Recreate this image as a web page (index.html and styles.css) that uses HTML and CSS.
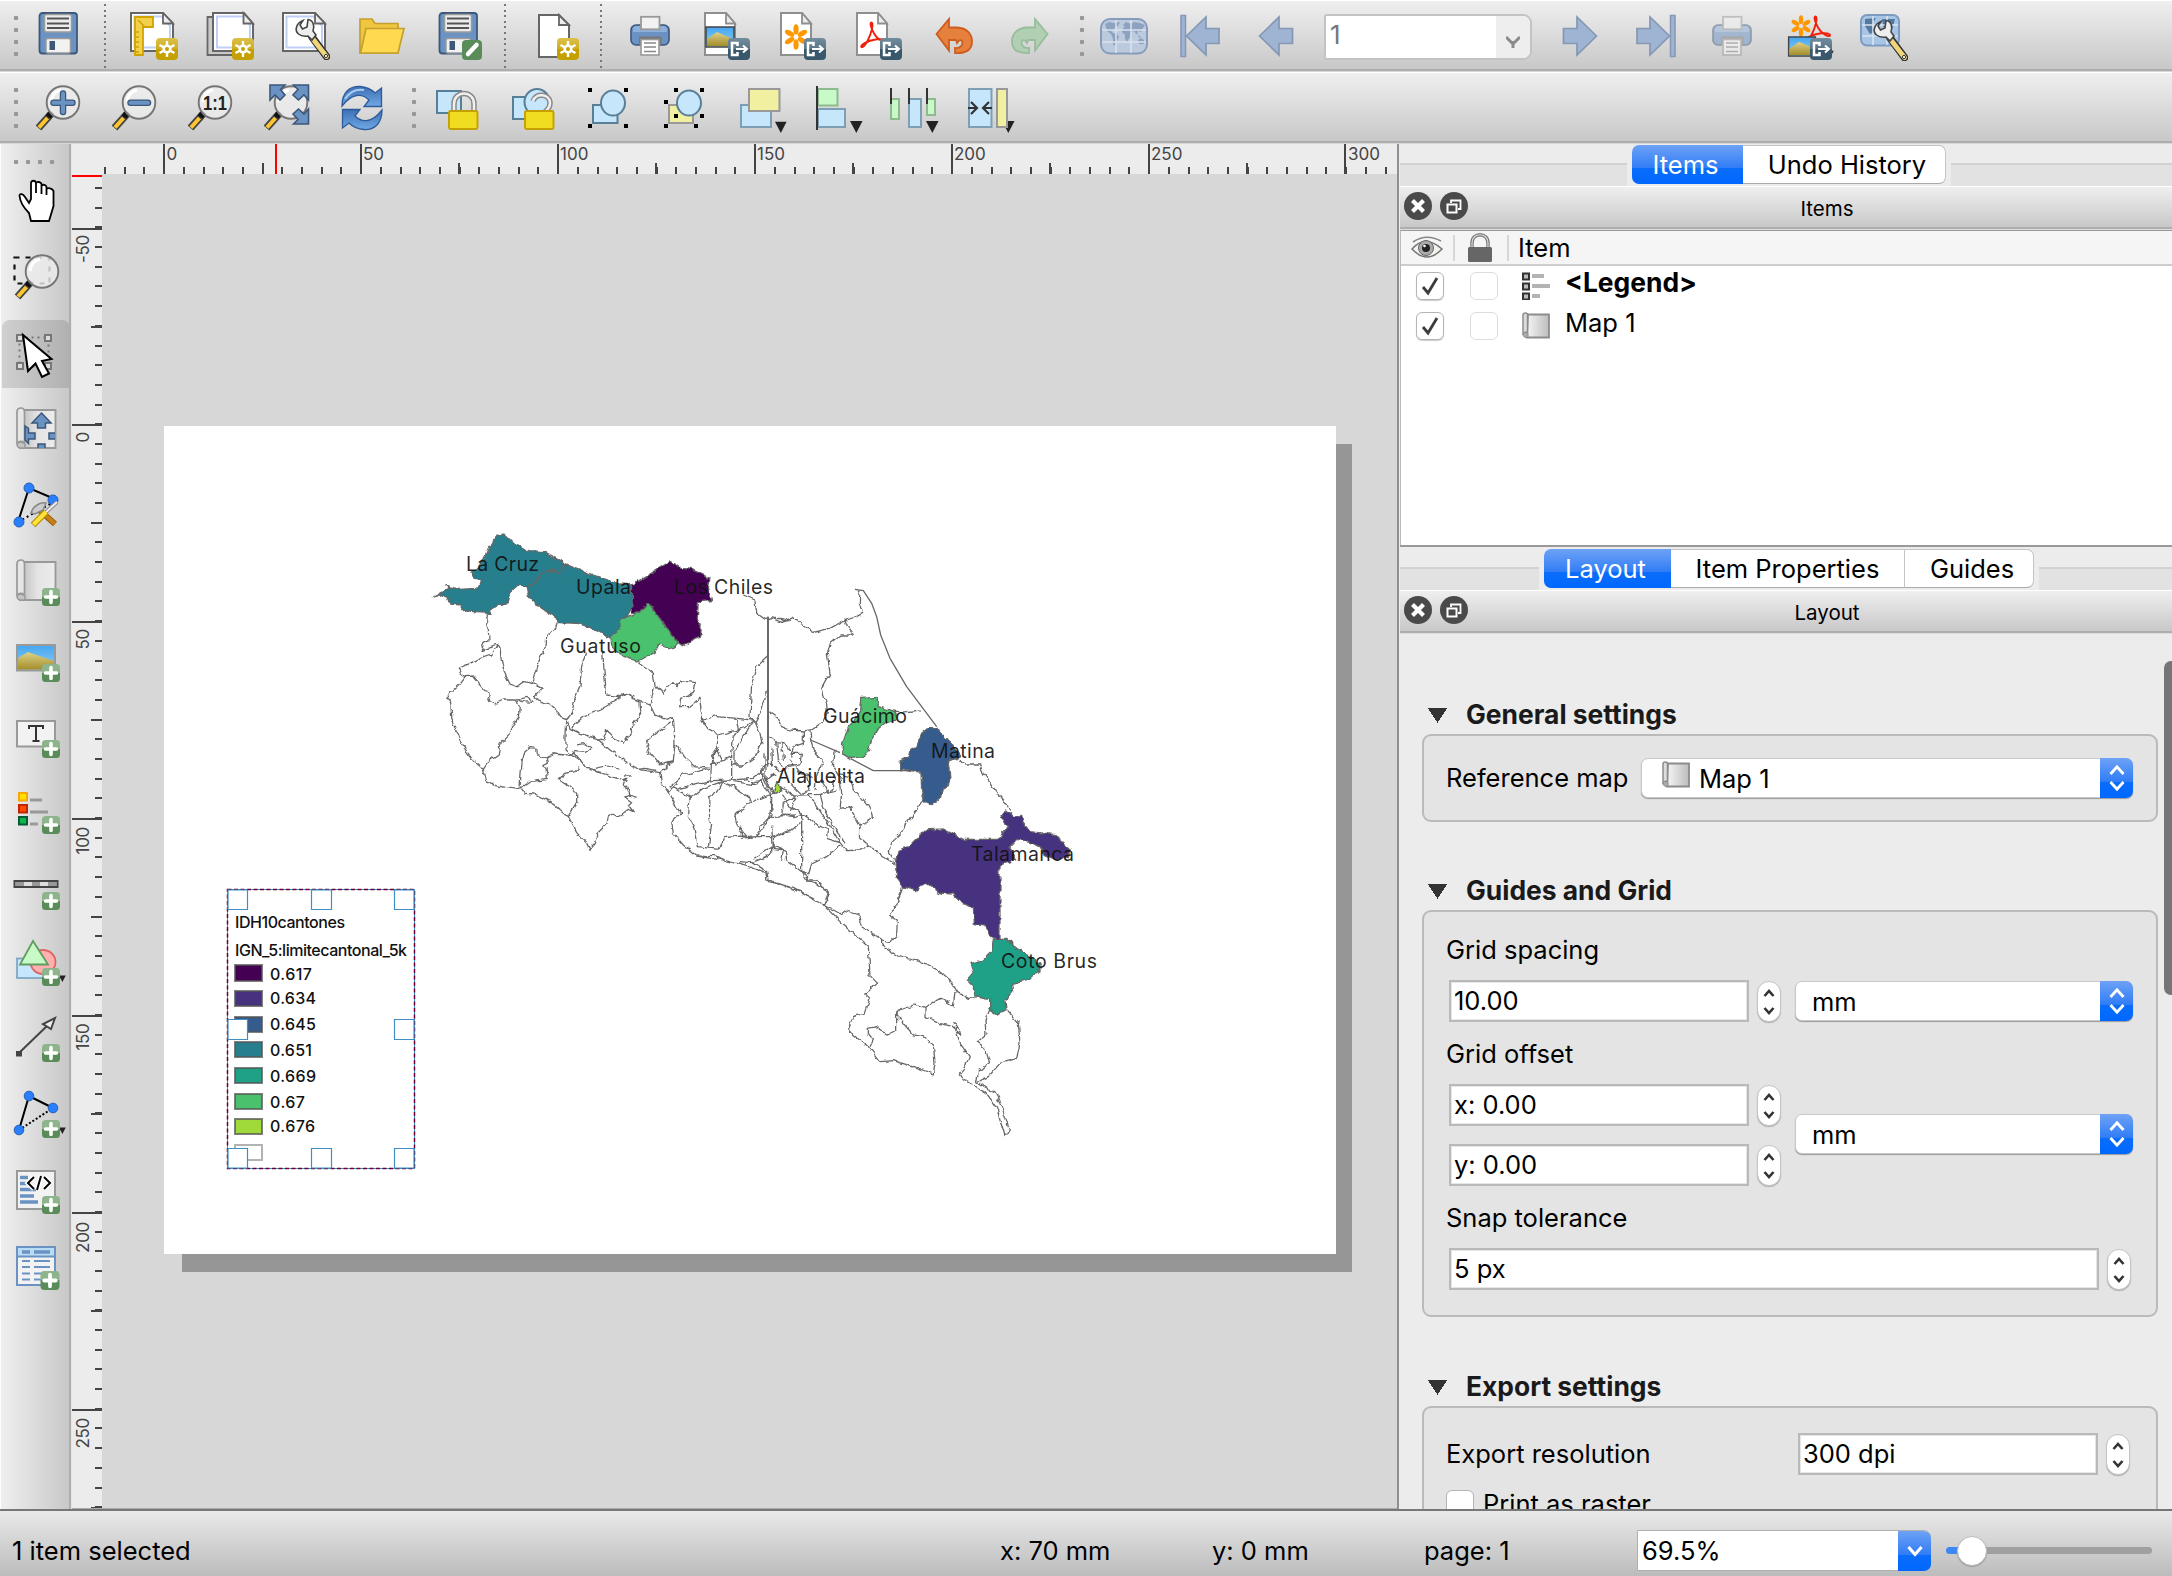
FILE: index.html
```html
<!DOCTYPE html>
<html lang="en">
<head>
<meta charset="utf-8">
<title>Layout</title>
<link rel="stylesheet" href="styles.css">
</head>
<body>
<svg class="defs" aria-hidden="true">
  <defs>
    <filter id="coast" x="-5%" y="-5%" width="110%" height="110%" color-interpolation-filters="sRGB"><feTurbulence type="fractalNoise" baseFrequency=".045" numOctaves="2" seed="4" result="n"/><feDisplacementMap in="SourceGraphic" in2="n" scale="17" xChannelSelector="R" yChannelSelector="G"/></filter>
    <linearGradient id="gNew" x2="0" y2="1"><stop offset="0" stop-color="#dcc04a"/><stop offset=".5" stop-color="#cfae1f"/><stop offset=".5" stop-color="#c4a000"/><stop offset="1" stop-color="#c4a000"/></linearGradient>
    <linearGradient id="gPlus" x2="0" y2="1"><stop offset="0" stop-color="#8db48b"/><stop offset=".5" stop-color="#8db48b"/><stop offset=".5" stop-color="#5a8c5a"/><stop offset="1" stop-color="#5a8c5a"/></linearGradient>
    <linearGradient id="gExp" x2="0" y2="1"><stop offset="0" stop-color="#718c9c"/><stop offset=".5" stop-color="#5a7688"/><stop offset=".5" stop-color="#3a586c"/><stop offset="1" stop-color="#3a586c"/></linearGradient>
    <linearGradient id="gSky" x2="0" y2="1"><stop offset="0" stop-color="#45a6f0"/><stop offset="1" stop-color="#8fd0f5"/></linearGradient>
    <linearGradient id="gSand" x2="0" y2="1"><stop offset="0" stop-color="#dfd28a"/><stop offset="1" stop-color="#a48d2a"/></linearGradient>
    <linearGradient id="gSync" x2="0" y2="1"><stop offset="0" stop-color="#3f6fb4"/><stop offset="1" stop-color="#6fa8e4"/></linearGradient>
    <linearGradient id="gRoll"><stop offset="0" stop-color="#bdbdbd"/><stop offset=".5" stop-color="#e4e4e4"/><stop offset="1" stop-color="#ececec"/></linearGradient>
    <linearGradient id="gMap"><stop offset="0" stop-color="#f5f5f5"/><stop offset="1" stop-color="#bcbcbc"/></linearGradient>
    <symbol id="bNew" viewBox="0 0 22 22"><rect width="22" height="22" rx="4" fill="url(#gNew)"/><path d="M11 3V19M3.500 7L18.500 15M18.500 7L3.500 15" stroke="#fff" stroke-width="2.400"/><circle cx="11" cy="11" r="4.600" fill="#fff"/><circle cx="11" cy="11" r="2" fill="#c4a000"/></symbol>
    <symbol id="bPlus" viewBox="0 0 18 18"><rect width="18" height="18" rx="3.500" fill="url(#gPlus)"/><path d="M9 3.500V14.500M3.500 9H14.500" stroke="#fff" stroke-width="3.600" stroke-linecap="round"/></symbol>
    <symbol id="bExp" viewBox="0 0 22 22"><rect width="22" height="22" rx="4" fill="url(#gExp)"/><path d="M9.500 8V5H4V17H9.500V14" fill="none" stroke="#fff" stroke-width="2.500"/><path d="M8 11H18M15 7.500L19 11L15 14.500" fill="none" stroke="#fff" stroke-width="2"/></symbol>
    <symbol id="page" viewBox="0 0 34 46"><path d="M2 1H23L32 11.500V43H2Z" fill="#fff" stroke="#8f8f8f" stroke-width="2"/><path d="M23 1V11.500H32Z" fill="#ececec" stroke="#8f8f8f" stroke-width="1.800"/></symbol>
    <symbol id="sheet" viewBox="0 0 46 42"><path d="M1 1H33L43 11.500V39H1Z" fill="#fff" stroke="#666" stroke-width="2"/><path d="M4.500 4.500H32L40 14V35.500H4.500Z" fill="none" stroke="#c0d0f5" stroke-width="2"/><path d="M33 1V11.500H43Z" fill="#eee" stroke="#666" stroke-width="1.800"/></symbol>
    <symbol id="disk" viewBox="0 0 48 48"><rect x="5.500" y="1" width="37.500" height="40.500" rx="3" fill="#6a93c4" stroke="#3d5778" stroke-width="1.800"/><rect x="10.500" y="2.500" width="27" height="17.500" rx="2" fill="#ececec" stroke="#9b9b9b" stroke-width="1.500"/><path d="M13 6.500H35M13 11.500H35M13 16H35" stroke="#555" stroke-width="1.800"/><rect x="12" y="26.500" width="24.500" height="14.500" rx="2" fill="#f2f2f2" stroke="#9b9b9b" stroke-width="1.500"/><rect x="15.500" y="29" width="5.500" height="9" fill="#3d5778"/></symbol>
    <symbol id="wrench" viewBox="0 0 48 48"><path d="M30 25L44.500 44.500" stroke="#333" stroke-width="7.500" stroke-linecap="round"/><path d="M31 27L44.500 44.500" stroke="#efd67a" stroke-width="4.800" stroke-linecap="round"/><circle cx="44" cy="44" r="1.600" fill="#fff" stroke="#333"/><path d="M21 8.500C14.500 11 12 18 16.500 22C19.500 24.500 23 24.500 26 24L30 28L34 23L31 19C33 14 31 8 26 7.500L25 15L20.500 17L18 13Z" fill="#eee" stroke="#444" stroke-width="1.600"/></symbol>
    <symbol id="printer" viewBox="0 0 48 48"><rect x="5" y="13" width="38" height="20" rx="5" fill="#6a93c4" stroke="#3d5778" stroke-width="1.600"/><path d="M7 18Q7 14 11 14H37Q41 14 41 18V20H7Z" fill="#8db0da"/><rect x="15" y="4.800" width="18.500" height="12.500" fill="#f2f2f2" stroke="#999" stroke-width="1.800"/><rect x="13" y="24.500" width="22.500" height="9" fill="#777"/><rect x="15" y="27.500" width="18" height="15.500" fill="#fff" stroke="#999" stroke-width="1.600"/><path d="M18 31H30M18 35H30M18 39.500H30" stroke="#888" stroke-width="1.600"/></symbol>
    <symbol id="flower" viewBox="0 0 28 28"><g fill="#ff9800"><ellipse cx="14" cy="6" rx="2.800" ry="5.600"/><ellipse cx="14" cy="22" rx="2.800" ry="5.600"/><g transform="rotate(60 14 14)"><ellipse cx="14" cy="6" rx="2.800" ry="5.600"/><ellipse cx="14" cy="22" rx="2.800" ry="5.600"/></g><g transform="rotate(120 14 14)"><ellipse cx="14" cy="6" rx="2.800" ry="5.600"/><ellipse cx="14" cy="22" rx="2.800" ry="5.600"/></g></g></symbol>
    <symbol id="acro" viewBox="0 0 28 28"><path d="M12 1.500C14.500 1.500 12 12 8.500 19C6 24 3 27 1.800 26C1 24 8 19.500 16 18.500C22 17.500 27 18.500 26.500 20.500C25.500 22.500 18 19 14.500 12.500C11.500 7 10 1.500 12 1.500Z" fill="none" stroke="#f0200c" stroke-width="1.900"/></symbol>
    <symbol id="pic" viewBox="0 0 30 22"><rect x="1" y="1" width="28" height="20" fill="url(#gSky)" stroke="#444" stroke-width="1.500"/><path d="M2 13L12 6L28 13V20H2Z" fill="url(#gSand)"/></symbol>
    <symbol id="world" viewBox="0 0 48 48"><rect x="1" y="7" width="46" height="34.500" rx="9" fill="#bccadd" stroke="#879cbd" stroke-width="2"/><path d="M5 12L9 10L14 11L20 10L18 14L15 15L14 18L11 19L13 21L17 22L19 25L17 29L15 34L13 32L13 27L11 22L7 19L6 15ZM23 13L26 10L31 12L34 10L40 11L45 13L43 16L41 20L38 19L37 23L34 19L31 20L30 25L27 30L25 27L25 23L22 20L23 16L25 15ZM38 28L41 26L44 28L44 32L39 32ZM38 23L41 25L39 26Z" fill="#8da1c1"/><path d="M2 18H46M2 30H46M16 8V41M31 8V41" stroke="#dae2ed" stroke-width="1.500"/></symbol>
    <symbol id="glass" viewBox="0 0 48 48"><path d="M17 30L4.500 44" stroke="#444" stroke-width="7.500"/><path d="M13.500 34L5 43.500" stroke="#fdc62f" stroke-width="4"/><path d="M18 28L14 33" stroke="#111" stroke-width="6"/><ellipse cx="29" cy="18.500" rx="16.300" ry="16.300" fill="#ececec" fill-opacity=".8" stroke="#757575" stroke-width="1.900"/><path d="M17 18Q18 8 27 6" stroke="#fff" stroke-width="3" fill="none"/></symbol>
    <symbol id="arrL" viewBox="0 0 48 48"><path d="M7.500 24L27 5V16.500H40.500V31.500H27V43Z" fill="#9fb4d2" stroke="#8497b5" stroke-width="1.700"/></symbol>
    <symbol id="arrEnd" viewBox="0 0 48 48"><rect x="5" y="3.500" width="4.500" height="41" fill="#9fb4d2" stroke="#8497b5" stroke-width="1.500"/><path d="M10.500 24L30 5V16.500H43V31.500H30V43Z" fill="#9fb4d2" stroke="#8497b5" stroke-width="1.700"/></symbol>
    <symbol id="uturn" viewBox="0 0 48 48"><path d="M6.500 22L19 7V15.500H27C37 16 42 22 42 29.500C42 38 36 41.500 25 41V36C31 36.500 33.500 32 32 29C31 27.500 28.500 28 27 31L26 28H19V38.500Z" fill="currentColor" stroke-width="1.800"/></symbol>
    <symbol id="roll" viewBox="0 0 48 48"><path d="M12 4H43.500V42H8V6Z" fill="url(#gRoll)" stroke="#999" stroke-width="1.900"/><path d="M5 6Q5 2 9 2Q12.500 2 12.500 6V36Q6 34 5 38Z" fill="#e6e6e6" stroke="#999" stroke-width="1.700"/><path d="M5 38Q5 42.500 10 42H13V38Q8 34 5 38Z" fill="#c4c4c4" stroke="#999" stroke-width="1.500"/></symbol>
    <symbol id="drop" viewBox="0 0 14 14"><path d="M0 1H13.500L6.800 14Z" fill="#222"/></symbol>
    <symbol id="mapIcon" viewBox="0 0 28 28"><path d="M6 2.500H27V25.500H5Z" fill="url(#gMap)" stroke="#8c8c8c" stroke-width="1.800"/><path d="M1 3Q1 1 3.500 1Q5.500 1 5.500 3V20Q2 20 1 23Z" fill="#ddd" stroke="#8c8c8c" stroke-width="1.500"/><path d="M1 22Q1 26 6 25.500V21Q2 19 1 22Z" fill="#aaa" stroke="#8c8c8c"/></symbol>
    <symbol id="closeBtn" viewBox="0 0 28 28"><circle cx="14" cy="14" r="14" fill="#4a4a4a"/><path d="M8.500 8.500L19.500 19.500M19.500 8.500L8.500 19.500" stroke="#fff" stroke-width="4.200"/></symbol>
    <symbol id="floatBtn" viewBox="0 0 28 28"><circle cx="14" cy="14" r="14" fill="#4a4a4a"/><path d="M11 11V8.500H20.500V17H18" fill="none" stroke="#fff" stroke-width="1.800"/><rect x="7.500" y="12.500" width="9" height="8" fill="none" stroke="#fff" stroke-width="2"/></symbol>
  </defs>
</svg>

<div class="app">
  <div class="bar">
    <div class="grip"></div>
    <svg class="ic"><use href="#disk"/></svg>
    <div class="sep"></div>
    <svg class="ic"><use href="#sheet" width="46" height="42"/><path d="M5 5H23V15H13V43H5Z" fill="#f3d04c" stroke="#cfa400" stroke-width="1.800"/><path d="M5 20H9M5 25H9M5 30H9M5 35H9M5 40H9M8 8L15 15" stroke="#cfa400" stroke-width="1.500"/><use href="#bNew" x="26" y="26" width="22" height="22"/></svg>
    <svg class="ic"><path d="M1.500 5H30V43H1.500Z" fill="#c9c9c9" stroke="#666" stroke-width="1.800"/><path d="M7 1H38L47 11.500V39H7Z" fill="#fff" stroke="#666" stroke-width="2"/><path d="M11 4.500H37L44 13V35.500H11Z" fill="none" stroke="#c0d0f5" stroke-width="2"/><path d="M37.500 1V11.500H47Z" fill="#eee" stroke="#666" stroke-width="1.800"/><use href="#bNew" x="26" y="26" width="22" height="22"/></svg>
    <svg class="ic"><use href="#sheet" width="46" height="42"/><use href="#wrench"/></svg>
    <svg class="ic"><path d="M2 41V7H14L17 11.500H40V41Z" fill="#f0c63f" stroke="#c3a02f" stroke-width="1.700"/><path d="M8 16.500H46L40 41H2.500Z" fill="#ffd950" stroke="#c3a02f" stroke-width="1.700"/></svg>
    <svg class="ic"><use href="#disk"/><rect x="28" y="28" width="20" height="20" rx="4" fill="#5a8c5a"/><path d="M34 42L42.500 33" stroke="#fff" stroke-width="4.500" stroke-linecap="round"/></svg>
    <div class="sep sep-wide"></div>
    <svg class="ic"><path d="M7 3H27L37 13V45H7Z" fill="#fff" stroke="#666" stroke-width="2"/><path d="M27 3V13H37Z" fill="#eee" stroke="#666" stroke-width="1.800"/><use href="#bNew" x="25" y="26" width="22" height="22"/></svg>
    <div class="sep sep-slim"></div>
    <svg class="ic"><use href="#printer"/></svg>
    <svg class="ic"><use href="#page" x="1" width="34" height="46"/><use href="#pic" x="3" y="14" width="30" height="22"/><use href="#bExp" x="26" y="26" width="22" height="22"/></svg>
    <svg class="ic"><use href="#page" x="1" width="34" height="46"/><use href="#flower" x="5" y="12" width="26" height="26"/><use href="#bExp" x="26" y="26" width="22" height="22"/></svg>
    <svg class="ic"><use href="#page" x="1" width="34" height="46"/><use href="#acro" x="5" y="9" width="29" height="28"/><use href="#bExp" x="26" y="26" width="22" height="22"/></svg>
    <svg class="ic undo"><use href="#uturn"/></svg>
    <svg class="ic redo"><use href="#uturn" transform="translate(48 0) scale(-1 1)"/></svg>
    <div class="grip grip-mid"></div>
    <svg class="ic"><use href="#world"/></svg>
    <svg class="ic"><use href="#arrEnd"/></svg>
    <svg class="ic"><use href="#arrL"/></svg>
    <div class="pagebox"><span>1</span><i><svg width="14" height="12"><path d="M0 1L7 8L14 1M7 5V12" fill="none" stroke="#8a8a8a" stroke-width="3"/></svg></i></div>
    <svg class="ic"><use href="#arrL" transform="translate(48 0) scale(-1 1)"/></svg>
    <svg class="ic"><use href="#arrEnd" transform="translate(48 0) scale(-1 1)"/></svg>
    <svg class="ic faded"><use href="#printer"/></svg>
    <svg class="ic"><use href="#drop" x="39" y="38" width="13" height="9"/><use href="#flower" x="5" y="3" width="24" height="22"/><use href="#acro" x="19" y="3" width="29" height="28"/><use href="#pic" x="3" y="24" width="30" height="21"/><use href="#bExp" x="26" y="26" width="22" height="22"/></svg>
    <svg class="ic"><rect x="1" y="3" width="38" height="30.500" rx="6" fill="#a9c5e6" stroke="#7d9bc0" stroke-width="2"/><path d="M5 7L16 6L12 13L14 20L10 22L5 14ZM22 7L35 7L33 15L27 20L23 14ZM28 26L34 24L33 29Z" fill="#55789f"/><path d="M2 13H38M2 24H38M13 4V33M27 4V33" stroke="#d6e4f4" stroke-width="1.600"/><use href="#wrench" y="1"/></svg>
  </div>
  <div class="bar">
    <div class="grip"></div>
    <svg class="ic"><use href="#glass"/><path d="M29 9.500V28M19.500 18.700H38.500" stroke="#3d5778" stroke-width="6.500" stroke-linecap="round"/><path d="M29 9.500V28M19.500 18.700H38.500" stroke="#6a93c4" stroke-width="4" stroke-linecap="round"/></svg>
    <svg class="ic"><use href="#glass"/><path d="M20.500 18.700H38" stroke="#3d5778" stroke-width="6.500" stroke-linecap="round"/><path d="M20.500 18.700H38" stroke="#6a93c4" stroke-width="4" stroke-linecap="round"/></svg>
    <svg class="ic"><use href="#glass"/><text class="one" x="17" y="25.500" textLength="24" lengthAdjust="spacingAndGlyphs">1:1</text></svg>
    <svg class="ic"><use href="#glass"/><g fill="#6a93c4" stroke="#3d5778" stroke-width="1.600"><path d="M8 1H23L18.500 5.500L23 11L18 16L13 11L8 16Z"/><path d="M46.500 1H31.500L36 5.500L31 11L36.500 16L42 11L46.500 16Z"/><path d="M46.500 40H31.500L36 35.500L31 30L36.500 25L42 30L46.500 25Z"/></g></svg>
    <svg class="ic"><g stroke="#2e5b9a" stroke-width="1.300" fill="url(#gSync)"><path d="M4 22C4 8 12 2 22 2.500C30 3 34 6 37 9L43.500 4V22.500H26L31 16C24 9 14 9 4 22Z"/><path d="M44 26C44 40 36 46 26 45.500C18 45 14 42 11 39L4.500 44V25.500H22L17 32C24 39 34 39 44 26Z"/></g><path d="M7 15Q14 4 26 6" fill="none" stroke="#a9cdf3" stroke-width="2"/></svg>
    <div class="grip grip-mid"></div>
    <svg class="ic"><rect x="5" y="7" width="24" height="22" fill="#c6e6fb" stroke="#587f98" stroke-width="2"/><path d="M22 28V20C22 6 42 6 42 20V28" fill="none" stroke="#8a8a8a" stroke-width="5.500"/><path d="M22 28V20C22 6 42 6 42 20V28" fill="none" stroke="#f0f0f0" stroke-width="2.500"/><rect x="17" y="27" width="28.500" height="18" rx="1.500" fill="#f0dc20" stroke="#c4a000" stroke-width="1.900"/></svg>
    <svg class="ic"><rect x="5" y="13" width="22" height="22" fill="#c6e6fb" stroke="#587f98" stroke-width="2"/><ellipse cx="29" cy="18" rx="12.500" ry="13" fill="#c6e6fb" stroke="#587f98" stroke-width="2"/><path d="M25 17C28 8 42 10 42 19C42 25 39 25 37 28" fill="none" stroke="#8a8a8a" stroke-width="5.500"/><path d="M25 17C28 8 42 10 42 19C42 25 39 25 37 28" fill="none" stroke="#f0f0f0" stroke-width="2.500"/><rect x="17" y="27" width="28.500" height="18" rx="1.500" fill="#f0dc20" stroke="#c4a000" stroke-width="1.900"/></svg>
    <svg class="ic"><rect x="9" y="21" width="24.500" height="18" fill="#c6e6fb" stroke="#587f98" stroke-width="2"/><ellipse cx="29" cy="19" rx="12" ry="12.500" fill="#c6e6fb" stroke="#587f98" stroke-width="2"/><path d="M4 4h4v4h-4zM40 4h4v4h-4zM4 40h4v4h-4zM40 40h4v4h-4z"/></svg>
    <svg class="ic"><rect x="9" y="21" width="24" height="18" fill="#f0f0a0" stroke="#999" stroke-width="2"/><ellipse cx="29" cy="19" rx="12" ry="12.500" fill="#c6e6fb" stroke="#587f98" stroke-width="2"/><path d="M14 4h4v4h-4zM40 4h4v4h-4zM4 16h4v4h-4zM14 30h4v4h-4zM40 30h4v4h-4zM4 40h4v4h-4zM34 40h4v4h-4z"/></svg>
    <svg class="ic"><rect x="5" y="21" width="30" height="22" fill="#c6e6fb" stroke="#7d9fb4" stroke-width="2"/><rect x="13" y="5" width="30.500" height="22" fill="#f0f0a0" stroke="#999" stroke-width="2"/><use href="#drop" x="38" y="37" width="14" height="12" preserveAspectRatio="none"/></svg>
    <svg class="ic"><rect x="6" y="5" width="19.500" height="16.500" fill="#c8fac8" stroke="#8fb98f" stroke-width="2"/><rect x="6" y="25" width="27" height="18" fill="#c6e6fb" stroke="#7d9fb4" stroke-width="2"/><path d="M5 2V46" stroke="#333" stroke-width="2"/><use href="#drop" x="37" y="36" width="15" height="13"/></svg>
    <svg class="ic"><rect x="3" y="15" width="8" height="20" fill="#c8fac8" stroke="#8fb98f" stroke-width="2"/><rect x="21" y="15" width="12" height="28" fill="#c6e6fb" stroke="#7d9fb4" stroke-width="2"/><rect x="39" y="15" width="8" height="16" fill="#c8fac8" stroke="#8fb98f" stroke-width="2"/><path d="M3 4V20M21 4V20M39 4V20" stroke="#333" stroke-width="2"/><use href="#drop" x="37" y="36" width="15" height="13"/></svg>
    <svg class="ic"><use href="#drop" x="37" y="36" width="15" height="13"/><rect x="5" y="5" width="22.500" height="38" fill="#c6e6fb" stroke="#7d9fb4" stroke-width="2"/><rect x="33" y="5" width="10" height="38" fill="#f0f0a0" stroke="#999" stroke-width="2"/><path d="M4 24H13M28 24H19M7 18L13 24L7 30M25 18L19 24L25 30" fill="none" stroke="#333" stroke-width="2.200"/></svg>
  </div>

  <div class="main">
    <div class="tools">
      <div class="hgrip"></div>
      <svg class="ic"><path d="M19 44L17 36C13 32 8 25 7.500 18.500C8 16 11 17 13 20L17 26L19 22V6C19.500 3 23.500 3 24 6V16V6C25 4 29 5 29.500 7V17V8.500C31 7 34 8 34.500 10V18V12C36 10.500 40 11 41.500 14V29L37 44Z" transform="translate(0 -1)" fill="#fff" stroke="#000" stroke-width="1.800"/></svg>
      <svg class="ic"><rect x="2.500" y="3.500" width="35" height="26" fill="none" stroke="#111" stroke-width="2.200" stroke-dasharray="5 6"/><use href="#glass" x="1" y="-1"/></svg>
      <div class="on"><svg class="ic"><rect x="7.500" y="7.500" width="29" height="29" fill="none" stroke="#777" stroke-width="2" stroke-dasharray="2 4"/><g fill="#ddd" stroke="#777" stroke-width="2"><rect x="5" y="5" width="6" height="6"/><rect x="33" y="5" width="6" height="6"/><rect x="5" y="33" width="6" height="6"/><rect x="33" y="33" width="6" height="6"/></g><path d="M11 5L16 41L23.500 33.500L30 47L37 43.500L30 31L39.500 29Z" fill="#fff" stroke="#000" stroke-width="2"/></svg></div>
      <svg class="ic"><use href="#roll"/><g fill="#6a93c4" stroke="#3d5778" stroke-width="1.500"><path d="M29.500 7L39 17H33.500V22H25.500V17H20Z"/><path d="M13 30V20L16.500 22.500V27H23V33H16.500V37.500L13 34Z"/><path d="M43 27H37V33H43"/><path d="M26 42V38H33V42"/></g></svg>
      <svg class="ic"><path d="M6 40L17 6L45 18" fill="none" stroke="#000" stroke-width="2"/><path d="M6 40L45 18" stroke="#000" stroke-width="2" stroke-dasharray="2 3"/><g fill="#2a7fff" stroke="#2560b0"><circle cx="17" cy="6" r="5"/><circle cx="41" cy="18" r="5"/><circle cx="7" cy="40" r="5"/></g><path d="M24 25L43 42" stroke="#9a5f10" stroke-width="6"/><path d="M28 28L43 42" stroke="#c57f14" stroke-width="4"/><path d="M19 31C21 24 28 20 34 21L31 28L23 32Z" fill="#ccc" stroke="#888" stroke-width="1.500"/><path d="M45 20L33 31" stroke="#888" stroke-width="4"/><path d="M45 20L33 31" stroke="#eee" stroke-width="2"/><path d="M34 30L21 43" stroke="#b48c00" stroke-width="6.500"/><path d="M34 30L21.500 42.500" stroke="#ffe23a" stroke-width="4.300"/></svg>
      <svg class="ic"><use href="#roll"/><use href="#bPlus" x="30" y="30" width="18" height="18"/></svg>
      <svg class="ic"><rect x="5" y="11" width="38" height="25.500" fill="url(#gSky)" stroke="#999" stroke-width="2"/><path d="M6 24L16 18L42 27V35.500H6Z" fill="url(#gSand)"/><use href="#bPlus" x="30" y="30" width="18" height="18"/></svg>
      <svg class="ic"><rect x="5" y="11" width="38" height="25.500" fill="#f2f2f2" stroke="#999" stroke-width="2"/><path d="M17 19V16H31V19M24 16V31M20.500 31H27.500" fill="none" stroke="#333" stroke-width="2"/><use href="#bPlus" x="30" y="30" width="18" height="18"/></svg>
      <svg class="ic"><g stroke-width="2"><rect x="7" y="7" width="8" height="7.500" fill="#ffe000" stroke="#f5a70b"/><rect x="7" y="19" width="8" height="7.500" fill="#ff4800" stroke="#bd2600"/><rect x="7" y="31" width="8" height="7.500" fill="#0fb64d" stroke="#065b35"/></g><path d="M18 14H30M18 26H36M18 38H26" stroke="#999" stroke-width="3"/><use href="#bPlus" x="30" y="30" width="18" height="18"/></svg>
      <svg class="ic"><rect x="2.500" y="19" width="43" height="6" fill="#ddd" stroke="#444" stroke-width="2"/><path d="M4 22H12M20 22H28M36 22H44" stroke="#999" stroke-width="4"/><use href="#bPlus" x="30" y="30" width="18" height="18"/></svg>
      <svg class="ic"><use href="#drop" x="44" y="37" width="13" height="7"/><rect x="5" y="20.500" width="28" height="19.500" fill="#c6e6fb" stroke="#7fa8c4" stroke-width="1.800"/><ellipse cx="31" cy="24" rx="12.500" ry="12" fill="#ffb0b0" stroke="#d66" stroke-width="1.800"/><path d="M21 3L36 26.500H8Z" fill="#c8fac8" stroke="#5f9c5f" stroke-width="1.800"/><use href="#bPlus" x="30" y="30" width="18" height="18"/></svg>
      <svg class="ic"><path d="M7 39L36 11" stroke="#444" stroke-width="2"/><path d="M43 4L39 15L31 10Z" fill="#eee" stroke="#444" stroke-width="2"/><rect x="4" y="37" width="6" height="5.500" fill="#444"/><use href="#bPlus" x="30" y="30" width="18" height="18"/></svg>
      <svg class="ic"><use href="#drop" x="44" y="37" width="13" height="7"/><path d="M7 40L17 6L41 18" fill="none" stroke="#000" stroke-width="2"/><path d="M7 40L41 18" stroke="#000" stroke-width="2" stroke-dasharray="2 2"/><g fill="#2a7fff" stroke="#2560b0"><circle cx="17" cy="6" r="4.800"/><circle cx="41" cy="18" r="4.800"/><circle cx="7" cy="40" r="4.800"/></g><use href="#bPlus" x="30" y="30" width="18" height="18"/></svg>
      <svg class="ic"><rect x="5" y="5" width="38" height="38" fill="#f2f2f2" stroke="#999" stroke-width="2"/><path d="M8 11.500H16M8 17.500H20M8 23.500H24M8 30H22M8 36H26" stroke="#6a93c4" stroke-width="3.400"/><path d="M22 11L16 17L22 23M32 11L38 17L32 23M29 10L25 24" fill="none" stroke="#fff" stroke-width="5"/><path d="M22 11L16 17L22 23M32 11L38 17L32 23M29 10L25 24" fill="none" stroke="#000" stroke-width="2"/><use href="#bPlus" x="30" y="30" width="18" height="18"/></svg>
      <svg class="ic"><rect x="5" y="5" width="38" height="38" fill="#f2f2f2" stroke="#6a93c4" stroke-width="2"/><path d="M5 5H43V14.500H5Z" fill="#b9dcf5" stroke="#6a93c4" stroke-width="2"/><path d="M10 10H18M22 10H38" stroke="#6a93c4" stroke-width="3.500"/><path d="M10 19H18M22 19H38M10 25H18M22 25H38M10 31.500H18M22 31.500H38M10 37.500H18M22 37.500H38" stroke="#6a93c4" stroke-width="2"/><use href="#bPlus" x="28" y="29" width="20" height="19"/></svg>
    </div>

    <div class="view">
      <svg class="canvas" viewBox="72 144 1325 1364">
        <rect x="72" y="144" width="1325" height="1364" fill="#ececec"/>
        <rect x="102" y="174" width="1295" height="1334" fill="#d7d7d7"/>
        <g stroke="#444" shape-rendering="crispEdges">
          <path d="M104 170.500H1397" stroke-width="7" stroke-dasharray="2 17.700"/>
          <path d="M261.500 168.500H1397" stroke-width="11" stroke-dasharray="2 194.900"/>
          <path d="M163 159H1397" stroke-width="30" stroke-dasharray="2 194.900"/>
          <path d="M98.500 187V1508" stroke-width="7" stroke-dasharray="2 17.690"/>
          <path d="M96.500 325.500V1508" stroke-width="11" stroke-dasharray="2 194.900"/>
          <path d="M87 227.500V1508" stroke-width="30" stroke-dasharray="2 194.900"/>
        </g>
        <path d="M276 144V174M72 176H102" stroke="#f00" stroke-width="2"/>
        <g class="rule">
          <text x="166.500" y="160">0</text><text x="363" y="160">50</text><text x="560" y="160">100</text><text x="757" y="160">150</text><text x="954" y="160">200</text><text x="1151" y="160">250</text><text x="1348" y="160">300</text>
        </g>
        <g class="rule rule-v">
          <text transform="translate(88.500 235) rotate(-90)">-50</text><text transform="translate(88.500 432) rotate(-90)">0</text><text transform="translate(88.500 629) rotate(-90)">50</text><text transform="translate(88.500 827) rotate(-90)">100</text><text transform="translate(88.500 1023.500) rotate(-90)">150</text><text transform="translate(88.500 1222) rotate(-90)">200</text><text transform="translate(88.500 1418) rotate(-90)">250</text>
        </g>
        <rect x="182" y="444" width="1170" height="828" fill="#969696"/>
        <rect x="164" y="426" width="1172" height="828" fill="#fff"/>

        <!-- north-west cantons -->
        <g class="land" transform="translate(420 520) scale(.33333)">
          <path d="M1043 290V740" stroke-width="7" stroke="#aaa"/>
          <g filter="url(#coast)">
          <path d="M202 283L200 310L205 330L207 362L192 370L183 392L200 385L215 378L232 372M232 372L240 385L244 420L252 455L270 492L290 500L310 485L330 488L366 505L345 530L362 545L390 553L410 570L425 592L440 598M410 305L400 330L380 352L378 380L358 420L350 450L340 485"/>
          <path d="M232 372L215 402L180 415L150 430L118 444L125 462L135 470L120 490L95 515L80 533L92 548L95 590L112 635L130 680L155 715L190 745L200 785L225 797L290 808L305 800L325 787L350 780L382 775L378 745L365 738L382 730L378 715L352 705L350 685L330 683L315 695L307 720L303 760L300 800L315 820L345 822L400 850L445 890L470 938L500 970L510 988L522 975L530 945L560 915L565 890L580 880L595 890L625 868L640 875L625 855L635 845L615 832L630 825L620 800L610 790L620 775L610 780L560 760L530 755L500 745L480 720L450 700L438 690L438 650L440 598"/>
          <path d="M135 470L160 468L178 490L200 515L210 545L225 552L250 540L290 540L320 532L345 548M290 540L298 560L295 590L270 640L240 670L235 705L200 730L190 745M345 548L310 545L295 540M378 715L400 702L440 705L465 700L480 720M480 740L465 755L430 760L418 780L450 800L470 820L470 850L445 890"/>
          <path d="M500 395L485 435L480 500L465 535L455 580L440 598L450 625L480 640L530 655L570 690L610 720L655 748L720 758L745 735L760 725M548 395L552 450L560 525L600 530L620 520L640 535L690 555M455 622L490 590L540 570L590 540L615 520M660 545L662 575L640 610L630 640L612 670L580 650L560 630L550 660L530 655M655 425L700 460L705 495L690 555L705 585L740 598L760 590L765 670L760 725L720 735L690 700L680 665L710 640L755 605"/>
          <path d="M705 495L730 522L740 500L762 488L775 500L780 482L828 488L820 520L785 535L782 560L805 560L840 532L845 600M845 600L890 590L950 595L1000 600L980 620L945 632L895 645L860 625L845 600M895 645L895 680L875 710L872 780M950 600L955 630L940 650L935 700L935 780M765 670L790 710L825 740L870 745M870 745L790 765L750 800L770 808L830 790L875 782L935 780L1000 775L1030 750M870 730L910 722L935 710M875 720L890 690L905 720L890 735Z"/>
          <path d="M970 225L1005 240L1010 280L1035 298L1080 295L1110 302M1043 410L1010 440L995 490L990 590L1005 605M1043 510L1025 570L1005 605L1020 640L1025 665L1005 710L970 735L935 735M1000 605L970 650L945 690L945 735"/>
          <path d="M720 758L725 790L745 820L782 880L755 905L760 940L790 975L830 1008L880 1010L915 1020M745 820L770 790M770 810L810 830L808 860L805 890L825 925L835 980L870 985L900 988L915 950L970 945M905 788L870 835L868 885L875 915L865 980M810 835L850 805L905 785L940 800L985 830L992 850L960 870L945 885L950 915L970 945L1010 950L1045 895L1055 870L1055 830M992 850L1010 840L1055 822L1030 770L1020 745M1010 950L1060 950L1110 930M1060 950L1062 980L1090 990L1085 1020M1000 1018L1060 975M1030 770L1010 795L940 785"/>
          <path d="M465 672L490 668L515 685L500 697L460 695M525 745L560 738L600 750M520 752L545 760M615 768L635 768M655 748L680 745L710 752M628 825L650 832"/>
          <path class="c651" d="M235 43L258 47L285 74L330 95L375 98L435 130L420 165L390 148L360 165L350 185L318 203L300 192L272 218L265 245L215 265L210 280L170 278L140 270L125 272L128 255L92 252L85 237L60 225L40 231L90 205L78 196L115 208L165 205L185 190L182 180L165 175L155 155L172 145L190 118L205 85Z"/>
          <path class="c651" d="M435 130L520 165L600 192L640 195L638 260L620 290L600 300L600 325L575 345L570 355L535 335L505 320L470 310L415 308L408 290L360 262L325 225L318 203L350 185L360 165L390 148L420 165Z"/>
          <path class="c617" d="M752 123L785 145L815 148L870 175L865 205L875 242L835 245L832 295L843 318L843 348L825 355L790 380L765 360L745 330L715 290L700 265L680 255L665 275L635 278L638 195Z"/>
          <path class="c67" d="M680 255L700 265L715 290L745 330L772 365L765 378L745 384L715 375L705 400L685 410L650 423L610 410L590 395L572 375L570 350L600 325L600 300L620 290L660 277Z"/>
          </g>
        </g>
        <!-- central valley and Caribbean coast -->
        <g class="land" transform="translate(740 560) scale(.33333)">
          <path d="M85 170V600"/>
          <path d="M345 88L370 92L395 130L410 170L422 225L450 295L500 380L545 440L590 500M400 632H560M212 540L300 578M332 596L400 632"/>
          <g filter="url(#coast)">
          <path d="M345 88L360 95L358 130L368 160L345 172L315 180L270 205L220 217L185 195L160 172L130 187L100 177L75 178M315 180L325 205L340 225L300 225L270 250L262 280L270 340L245 385L260 430L262 460L250 485L215 510L190 513L150 510L125 500L115 475L88 455M420 455L470 458L500 455L545 450M210 512L212 540M190 515L190 550L160 560L155 590M212 540L220 570L250 600L230 650L225 690M285 575L280 620L300 655L305 700L300 745L330 740L360 795L400 770L385 740L360 710L340 690L330 650L300 645"/>
          <path d="M655 600L680 615L720 615L730 640L780 710L810 748M548 722L530 750L500 790L495 805L455 845L448 875L468 905M360 795L358 830L385 855L430 890L465 912M385 855L360 870L320 872L300 848L260 835L262 808L230 795L200 770L185 765V935M300 848L265 790L225 730L205 705M315 850L280 800L250 740L240 700M205 945L215 912L260 890L300 855M205 945L185 935L140 900L135 870L100 865L80 890L35 908L0 905M35 908L80 935L85 965L115 970L160 985L220 1018M185 935L205 960L225 965L265 995L262 1020M490 980L472 1018"/>
          <path d="M88 530L110 545L140 550L155 580L185 580L180 610L145 620L120 635L100 610L70 620L60 640L80 655L100 640L110 650M75 580V655L100 700M95 560L98 620M110 545L115 600L135 630M125 548L130 600M150 600L180 640L215 650M60 660L40 670L20 655M60 660L90 700L100 745L90 770L60 800L50 830L0 835M125 700L150 740L190 760L165 770L125 765L130 730L175 705L240 703L290 690M90 770L165 765M95 830L150 815L190 780M95 800L100 865M110 680L140 690L170 720L150 750M200 650L210 690L180 700L150 670M245 660L270 700L285 650M0 800L20 830"/>
          <path class="c67" d="M365 415L410 412L415 440L450 450L470 455L465 480L435 490L410 510L395 540L385 575L365 590L332 596L305 580L308 550L325 500L345 480L362 450Z"/>
          <path class="c645" d="M590 500L600 515L640 560L660 590L625 605L630 655L625 680L605 690L602 712L575 735L555 725L545 690L543 640L480 628L477 605L505 590L510 572L530 560L545 520L560 508Z"/>
          <path class="c676" d="M110 665L125 690L100 700Z"/>
          </g>
        </g>
        <!-- southern cantons -->
        <g class="land" transform="translate(640 780) scale(.33333)">
          <g filter="url(#coast)">
          <path d="M170 225L230 235L335 262L380 280L380 300L410 312L480 335L550 375L605 430L650 470L685 500L688 550L690 590L710 610L675 640L690 655L675 700L640 710L625 745L640 765L685 800L720 845L760 842L820 860L880 882L885 850L880 795L850 770L820 765L790 730L770 700L770 750L740 765L710 740L685 745L685 760L700 780L690 800M550 375L600 402L615 390L655 405L665 440L725 478L725 495L770 525L830 540L890 565L930 600L950 635L985 655L1055 652M550 375L565 340L530 300L500 300L480 270M790 325L770 370L748 405L772 420L770 465L750 485L725 480M770 700L775 690L825 675L855 685L880 665L905 655L940 678L945 635M855 685L855 710L900 730L935 740L965 765L960 745L940 730M945 740L960 790L988 830L975 860L958 880L970 900L1040 940L1070 985L1090 1050L1095 1070L1108 1050L1095 1010L1080 965L1065 935L1045 930L1010 905L1015 875L1048 845L1035 805L1012 785L1038 765L1035 720L1050 685M1100 688L1135 730L1140 790L1130 835L1080 850L1045 890L1015 905"/>
          <path class="c634" d="M1100 90L1125 110L1145 105L1150 130L1170 155L1255 165L1262 185L1290 210L1285 230L1250 240L1215 225L1200 200L1180 190L1130 178L1105 205L1130 240L1080 255V485L1055 470L1030 435L1003 430L1000 385L960 365L940 345L905 342L860 310L825 332L790 320L770 290L765 250L775 210L805 200L855 150L910 147L970 178H1080L1088 155L1105 140L1080 115Z"/>
          <path class="c669" d="M1060 478L1100 478L1130 505L1200 550L1200 575L1175 595L1115 610L1118 635L1092 660L1095 690L1070 702L1052 690L1052 655L1005 650L1000 620L982 602L1000 580L990 550L1030 540L1055 515Z"/>
          </g>
        </g>
        <g class="names">
          <text x="466" y="570.500" textLength="73">La Cruz</text>
          <text x="576" y="593.500" textLength="55">Upala</text>
          <text x="674" y="593.500" textLength="99">Los Chiles</text>
          <text x="560" y="653" textLength="81">Guatuso</text>
          <text x="823" y="723" textLength="84">Guácimo</text>
          <text x="931" y="758" textLength="64">Matina</text>
          <text x="777" y="783" textLength="88">Alajuelita</text>
          <text x="971" y="860.500" textLength="103">Talamanca</text>
          <text x="1001" y="968" textLength="96">Coto Brus</text>
        </g>

        <rect x="227.500" y="889.500" width="187" height="279" fill="#fff" stroke="#3a93d0"/>
        <rect x="227.500" y="889.500" width="187" height="279" fill="none" stroke="#6b0030" stroke-dasharray="4 2.500" stroke-width="1.500"/>
        <g class="keys">
          <text x="235" y="927.500" textLength="110">IDH10cantones</text>
          <text x="235" y="955.500" textLength="172">IGN_5:limitecantonal_5k</text>
          <text x="270" y="979.500" textLength="42">0.617</text><text x="270" y="1003.500" textLength="46">0.634</text><text x="270" y="1029.500" textLength="46">0.645</text><text x="270" y="1055.500" textLength="42">0.651</text><text x="270" y="1081.500" textLength="46">0.669</text><text x="270" y="1107.500" textLength="35">0.67</text><text x="270" y="1131.500" textLength="45">0.676</text>
        </g>
        <g stroke="#555" stroke-opacity=".75" stroke-width="2">
          <rect class="c617" x="235" y="965" width="27" height="16"/><rect class="c634" x="235" y="991" width="27" height="15"/><rect class="c645" x="235" y="1017" width="27" height="15"/><rect class="c651" x="235" y="1042" width="27" height="15"/><rect class="c669" x="235" y="1068" width="27" height="15"/><rect class="c67" x="235" y="1094" width="27" height="15"/><rect class="c676" x="235" y="1119" width="27" height="15"/><rect fill="#fff" stroke="#999" x="235" y="1145" width="27" height="15"/>
        </g>
        <g fill="#fff" stroke="#3f8fc4" stroke-width="1.200">
          <path d="M228 890H247.500V909.500H228ZM311.500 890H331.500V909.500H311.500ZM394.500 890H414V909.500H394.500ZM228 1019.500H247.500V1039.500H228ZM394.500 1019.500H414V1039.500H394.500ZM228 1148.500H247.500V1168H228ZM311.500 1148.500H331.500V1168H311.500ZM394.500 1148.500H414V1168H394.500Z"/>
        </g>
      </svg>
    </div>

    <div class="side">
      <div class="tabs"><div class="tabrow t1"><span class="cur">Items</span><span>Undo History</span></div></div>
      <div class="title"><svg class="cb"><use href="#closeBtn"/></svg><svg class="cb"><use href="#floatBtn"/></svg><b>Items</b></div>
      <div class="list">
        <div class="head">
          <div class="h1"><svg width="32" height="24"><path d="M1 13Q14 -2 31 13Q16 29 1 13Z" fill="#f3f3ee" stroke="#777" stroke-width="1.600"/><circle cx="15" cy="12" r="7.500" fill="#aaa" stroke="#666"/><circle cx="15" cy="12" r="4" fill="#222"/><circle cx="13.500" cy="10" r="1.300" fill="#fff"/><path d="M2 6Q15 -3 30 5" fill="none" stroke="#888" stroke-width="1.600"/></svg></div>
          <div class="h2"><svg width="26" height="30"><path d="M5 16V10C5 -1 21 -1 21 10V16" fill="none" stroke="#777" stroke-width="3.500"/><path d="M5 16V10C5 -1 21 -1 21 10V16" fill="none" stroke="#ddd" stroke-width="1.200"/><rect x="1" y="14" width="24" height="15" rx="1.500" fill="#666"/></svg></div>
          <div class="h3">Item</div>
        </div>
        <div class="row"><i class="chk"><svg width="28" height="28"><path d="M7 15L12 21L21 6" fill="none" stroke="#3c3c3c" stroke-width="2.800"/></svg></i><i class="chk dim"></i><svg class="ri"><g fill="#bbb" stroke="#333" stroke-width="2"><rect x="1" y="1.500" width="6" height="6"/><rect x="1" y="11.500" width="6" height="6"/><rect x="1" y="21.500" width="6" height="6"/></g><path d="M10 4H22M10 14H28M10 24H18" stroke="#b3b3b3" stroke-width="4"/></svg><span class="bold">&lt;Legend&gt;</span></div>
        <div class="row"><i class="chk"><svg width="28" height="28"><path d="M7 15L12 21L21 6" fill="none" stroke="#3c3c3c" stroke-width="2.800"/></svg></i><i class="chk dim"></i><svg class="ri"><use href="#mapIcon"/></svg><span>Map 1</span></div>
      </div>
      <div class="tabs tabs2"><div class="tabrow t2"><span class="cur">Layout</span><span>Item Properties</span><span>Guides</span></div></div>
      <div class="title"><svg class="cb"><use href="#closeBtn"/></svg><svg class="cb"><use href="#floatBtn"/></svg><b>Layout</b></div>
      <div class="props">
        <h2>General settings</h2>
        <div class="box box1"><label>Reference map</label><div class="combo"><svg width="28" height="28"><use href="#mapIcon"/></svg>Map 1<i></i></div></div>
        <h2>Guides and Grid</h2>
        <div class="box box2">
          <label>Grid spacing</label>
          <div class="line"><div class="field">10.00</div><div class="spin"></div><div class="combo unit">mm<i></i></div></div>
          <label class="off">Grid offset</label>
          <div class="line pair"><div class="stack"><div class="line"><div class="field">x: 0.00</div><div class="spin"></div></div><div class="line"><div class="field">y: 0.00</div><div class="spin"></div></div></div><div class="combo unit">mm<i></i></div></div>
          <label class="off">Snap tolerance</label>
          <div class="line"><div class="field wide">5 px</div><div class="spin"></div></div>
        </div>
        <h2>Export settings</h2>
        <div class="box box3">
          <div class="line res"><label>Export resolution</label><div class="field">300 dpi</div><div class="spin"></div></div>
          <div class="line"><i class="chk raster"></i><label>Print as raster</label></div>
        </div>
        <div class="thumb"></div>
      </div>
    </div>
  </div>

  <div class="status">
    <span class="s1">1 item selected</span><span class="s2">x: 70 mm</span><span class="s3">y: 0 mm</span><span class="s4">page: 1</span>
    <div class="zoom"><span>69.5%</span><i></i></div>
    <div class="slider"><i></i></div>
  </div>
</div>
<script src="controls.js"></script>
</body>
</html>
```

FILE: controls.js
```
// Puts the stepper chevrons into every spin box and pop-up button.
var chevrons = function (w, h, color, width, d) {
  return '<svg width="' + w + '" height="' + h + '"><path d="' + d + '" fill="none" stroke="' + color + '" stroke-width="' + width + '"/></svg>';
};
document.querySelectorAll('.combo > i').forEach(function (el) {
  el.innerHTML = chevrons(16, 26, '#fff', 2.8, 'M1.500 9L8 1.800L14.500 9M1.500 17L8 24.200L14.500 17');
});
document.querySelectorAll('.spin').forEach(function (el) {
  el.innerHTML = chevrons(12, 26, '#333', 2.6, 'M1.500 7L6 2L10.500 7M1.500 19L6 24L10.500 19');
});
document.querySelectorAll('.zoom > i').forEach(function (el) {
  el.innerHTML = chevrons(16, 12, '#fff', 3, 'M1.500 2L8 9.500L14.500 2');
});
```

FILE: styles.css
```css
* { box-sizing: border-box; }
body { margin: 0; overflow: hidden; font-family: Inter, "Liberation Sans", sans-serif; font-size: 25.500px; color: #000; }
i { font-style: normal; }
.defs { position: absolute; width: 0; height: 0; }
.app { width: 2172px; height: 1576px; display: flex; flex-direction: column; background: #ececec; }

/* toolbars */
.bar { height: 72px; flex: none; display: flex; align-items: center; background: linear-gradient(#fff 0, #fff 1px, #efefef 1px, #c8c8c8 69px, #aeaeae 69px, #aeaeae 71px, #d8d8d8 71px); }
.ic { width: 48px; height: 48px; margin: 0 14px; flex: none; overflow: visible; display: block; }
.grip { width: 20px; height: 48px; flex: none; background: radial-gradient(circle at 16px 6px, #979797 2px, transparent 2.600px) 0 0 / 20px 12px; }
.grip-mid { width: 18px; background-position: -2px 0; }
.sep { width: 20px; height: 64px; flex: none; background: repeating-linear-gradient(#777 0, #777 2px, transparent 2px, transparent 5.600px) 8px 0 / 2px 100% no-repeat; }
.sep-wide { width: 22px; }
.sep-slim { width: 18px; background-position: 6px 0; }
.faded { opacity: .5; }
.undo { color: #e6813d; stroke: #cf5c1c; }
.redo { color: #b1cfb3; stroke: #98bd9b; }
.one { font: bold 20px "Liberation Sans", sans-serif; fill: #222; }
.pagebox { width: 208px; height: 46px; margin: 2px 10px 0; border: 2px solid #c3c3c3; border-radius: 3px 9px 9px 3px; background: #fff; display: flex; align-items: center; color: #777; font-size: 26px; }
.pagebox span { flex: 1; padding: 0 0 5px 4px; }
.pagebox i { width: 34px; height: 42px; background: #eee; border-radius: 0 8px 8px 0; display: flex; align-items: center; justify-content: center; padding-top: 10px; }

/* work area */
.main { height: 1365px; flex: none; display: flex; }
.tools { width: 72px; flex: none; background: linear-gradient(90deg, #fff 0, #fff 1px, #efefef 1px, #c8c8c8 69px, #aeaeae 69px, #aeaeae 71px, #e4e4e4 71px); padding-top: 10px; }
.tools .ic { margin: 0 12px 28px; }
.hgrip { width: 48px; height: 14px; margin: 0 0 10px 10px; background: radial-gradient(circle at 6px 8px, #979797 2px, transparent 2.600px) 0 0 / 12px 14px; }
.tools .on { height: 68px; margin: -10px 2px 18px; padding-top: 10px; background: linear-gradient(90deg, #d0d0d0, #b0b0b0); border-radius: 8px 8px 0 0; }
.tools .on .ic { margin: 0 10px; }
.view { width: 1325px; height: 1365px; flex: none; border-bottom: 1px solid #aaa; }
.canvas { display: block; width: 1325px; height: 1364px; }
.rule { font-size: 17px; fill: #444; }
.rule-v { text-anchor: end; letter-spacing: -.3px; }
.names { font-size: 19.500px; fill: #111; fill-opacity: .92; }
.keys { font-size: 16px; font-weight: 500; fill: #111; }
.land path { fill: none; stroke: #666; stroke-width: 3.800; stroke-linejoin: round; }
.land .c617, .c617 { fill: #440154; }
.land .c634, .c634 { fill: #46327e; }
.land .c645, .c645 { fill: #365c8d; }
.land .c651, .c651 { fill: #277f8e; }
.land .c669, .c669 { fill: #1fa187; }
.land .c67, .c67 { fill: #4ac16d; }
.land .c676, .c676 { fill: #9fda3a; }

/* side panels */
.side { flex: 1; min-width: 0; display: flex; flex-direction: column; border-left: 2px solid #8f8f8f; padding-left: 1px; overflow: hidden; }
.tabs { height: 42px; flex: none; display: flex; justify-content: center; background: linear-gradient(#ececec 19px, #d2d2d2 19px, #d2d2d2 21px, #e2e2e2 21px); }
.tabs2 { height: 45px; background: linear-gradient(#999 2px, #ececec 2px, #ececec 22px, #d2d2d2 22px, #d2d2d2 24px, #e2e2e2 24px); padding-top: 3px; }
.tabrow { display: flex; margin-left: 6px; padding: 1px 5px 0; background: #ececec; }
.tabrow span { height: 39px; background: #fff; border: 1px solid #c4c4c4; border-bottom-color: #aaa; display: flex; align-items: center; justify-content: center; border-left: 0; }
.tabrow .cur { color: #fff; border: 0; padding-right: 4px; border-radius: 7px 0 0 7px; background: linear-gradient(#6ea2f5, #2f7cf6 60%, #0a6cfb 60%, #0068ff); }
.tabrow span:last-child { border-radius: 0 7px 7px 0; padding-left: 6px; }
.t1 span:nth-child(1) { width: 111px; }
.t1 span:nth-child(2) { width: 203px; }
.t2 span:nth-child(1) { width: 127px; }
.t2 span:nth-child(2) { width: 234px; }
.t2 span:nth-child(3) { width: 129px; }
.title { height: 44px; flex: none; display: flex; align-items: center; gap: 8px; padding: 0 0 4px 4px; background: linear-gradient(#fff 1px, #efefef 1px, #c8c8c8 41px, #aeaeae 41px, #aeaeae 43px, #ddd 43px); }
.title b { flex: 1; font-weight: 400; font-size: 20.500px; text-align: center; padding: 5px 0 0 6px; }
.title b::after { content: ""; display: inline-block; width: 0; }
.cb { width: 28px; height: 28px; flex: none; }
.title b { margin-right: 0; }
.list { height: 315px; flex: none; background: #fff; border-top: 1px solid #999; border-left: 1px solid #bbb; }
.head { height: 35px; display: flex; align-items: center; background: #f5f5f5; border-bottom: 2px solid #cdcdcd; }
.head > div { height: 26px; display: flex; align-items: center; border-right: 2px solid #d6d6d6; }
.head .h1 { width: 54px; padding-left: 10px; }
.head .h2 { width: 54px; padding-left: 12px; }
.head .h3 { border: 0; padding-left: 9px; }
.row { height: 40px; display: flex; align-items: center; padding: 0 0 0 15px; }
.row span { margin: -8px 0 0 15px; }
.row .bold { font-weight: 700; font-size: 26.400px; }
.chk { width: 28px; height: 28px; flex: none; background: #fff; border: 1px solid #b5b5b5; border-radius: 6px; box-shadow: 0 1px 1px #ccc; }
.chk svg { display: block; margin: -1px; }
.dim { border-color: #ddd; box-shadow: none; margin: 0 24px 0 26px; }
.ri { width: 28px; height: 28px; flex: none; }
.props { height: 875px; flex: none; position: relative; overflow: hidden; padding: 60px 14px 0 22px; }
.props h2 { margin: 0; height: 40px; font-size: 26.400px; line-height: 40px; color: #1a1a1a; padding-left: 44px; background: conic-gradient(from -33deg at 50% 100%, #333 66deg, transparent 0) 5px 14px / 21px 15px no-repeat; }
.box { border: 2px solid #bababa; border-radius: 9px; background: #e4e4e4; padding-left: 22px; margin-bottom: 49px; }
.box1 { height: 88px; display: flex; align-items: center; gap: 12px; margin-bottom: 48px; }
.box2 { height: 407px; padding-top: 22px; }
.box3 { height: 200px; padding-top: 25px; }
.box label { display: block; height: 32px; line-height: 32px; white-space: nowrap; }
.box1 label { width: 183px; }
.box .off { margin-top: 16px; }
.line { display: flex; }
.box2 > .line { padding-left: 3px; margin-top: 14px; }
.field { width: 300px; height: 42px; flex: none; background: #fff; border: 2px solid #b9b9b9; box-shadow: inset 0 0 0 1px #e6e6e6; padding-left: 3px; line-height: 37px; }
.wide { width: 650px; }
.spin { width: 24px; height: 41px; flex: none; margin: 1px 0 0 8px; border-radius: 12px; background: #fff; border: 1px solid #c4c4c4; box-shadow: 0 1px 1px #aaa; display: flex; align-items: center; justify-content: center; }
.combo { width: 492px; height: 40px; flex: none; background: #fff; border: 1px solid #c9c9c9; border-radius: 7px; box-shadow: 0 1px 1px #999; display: flex; align-items: center; padding-left: 20px; gap: 9px; }
.combo > svg { margin-top: -6px; }
.combo > i, .zoom > i { width: 33px; height: 40px; margin: -1px -1px -1px auto; border-radius: 0 7px 7px 0; background: linear-gradient(#6ea2f5, #2f7cf6 60%, #0a6cfb 60%, #0068ff); display: flex; align-items: center; justify-content: center; }
.unit { width: 338px; margin: 1px 0 0 14px; padding-left: 16px; }
.pair { align-items: center; }
.pair > .unit { margin-top: -2px; }
.stack { display: flex; flex-direction: column; gap: 18px; }
.res label { width: 352px; margin-top: 5px; }
.raster { margin: 15px 9px 0 0; }
.box3 .line:last-child label { margin-top: 13px; }
.thumb { position: absolute; right: -6px; top: 27px; width: 14px; height: 334px; border-radius: 7px; background: #757575; }

/* status bar */
.status { height: 67px; flex: none; border-top: 2px solid #777; background: linear-gradient(#e9e9e9, #bcbcbc); display: flex; align-items: center; padding: 14px 0 0 12px; }
.status > * { flex: none; }
.s1 { width: 988px; }
.s2 { width: 212px; }
.s3 { width: 212px; }
.s4 { width: 213px; }
.zoom { width: 294px; height: 41px; border: 1px solid #b0b0b0; border-radius: 0 7px 7px 0; background: #fff; display: flex; align-items: center; padding-left: 4px; }
.slider { width: 206px; height: 7px; margin-left: 15px; border-radius: 4px; background: linear-gradient(90deg, #3d87f5 20px, #a0a0a0 20px); display: flex; align-items: center; }
.slider i { width: 30px; height: 30px; margin-left: 11px; border-radius: 50%; background: #fff; border: 1px solid #bbb; box-shadow: 0 1px 1px #999; }
```
